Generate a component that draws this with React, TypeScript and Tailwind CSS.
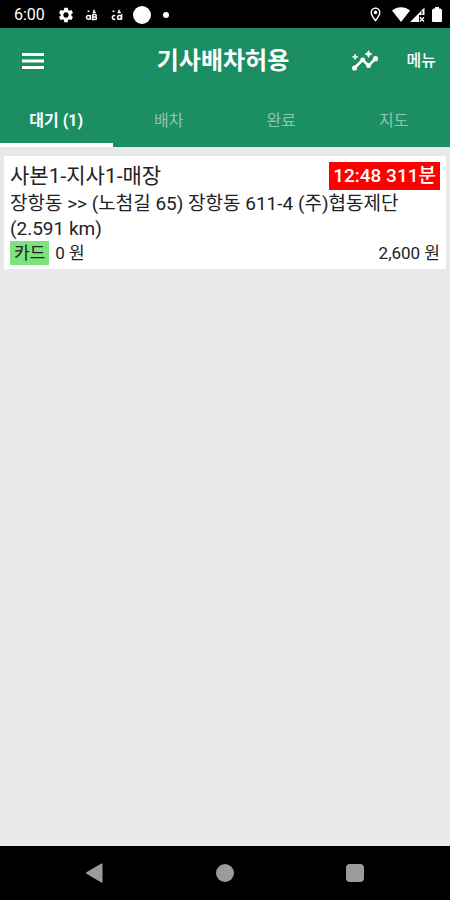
import React, { useState } from 'react';
import { MdOutlineLocationOn, MdSettings } from 'react-icons/md';

interface Order {
  id: number;
  store: string;
  time: string;
  elapsed: string;
  route: string;
  distance: string;
  payment: string;
  price: string;
  fee: string;
}

const TABS = ['대기 (1)', '배차', '완료', '지도'];

const ORDERS: Order[] = [
  {
    id: 1,
    store: '사본1-지사1-매장',
    time: '12:48',
    elapsed: '311분',
    route: '장항동 >> (노첨길 65) 장항동 611-4 (주)협동제단',
    distance: '(2.591 km)',
    payment: '카드',
    price: '0 원',
    fee: '2,600 원',
  },
];

// Two round glyphs with ticks above them, used for app notifications
function AppNoticeIcon({ open }: { open?: boolean }) {
  return (
    <svg viewBox="0 0 13 12" className="w-[13px] h-3" fill="none" stroke="white" strokeWidth="1.5">
      <path d="M2.6 2.2h1.8" />
      <path d="M9 .8v2.4M7.6 3.6h3.2" />
      <path d={open ? 'M5.2 6.8a1.9 1.9 0 1 0 0 3.2' : 'M5.5 6v4.8M5.3 8.4a1.9 1.9 0 1 1-3.8 0 1.9 1.9 0 0 1 3.8 0'} />
      <path d={open ? 'M11.6 5v5.8M11.4 8.4a1.9 1.9 0 1 1-3.8 0 1.9 1.9 0 0 1 3.8 0' : 'M7.8 5.6v5h2.4a1.2 1.2 0 0 0 0-2.5H7.8M10 8.1a1.2 1.2 0 0 0 0-2.5H7.8'} />
    </svg>
  );
}

// Zigzag line with round joints and two sparkles
function InsightsIcon() {
  return (
    <svg viewBox="0 0 24 24" className="w-7 h-7" fill="white" stroke="white">
      <path d="M3 18l7-7 5 5 6-6" fill="none" strokeWidth="2.2" />
      <g stroke="none">
        <circle cx="3" cy="18" r="2.2" />
        <circle cx="10" cy="11" r="2.1" />
        <circle cx="15" cy="16" r="2.1" />
        <circle cx="21" cy="10" r="2.2" />
      </g>
      <path strokeWidth="0.6" d="M15 9l.94-2.07L18 6l-2.06-.93L15 3l-.92 2.07L12 6l2.08.93zM3.500 11L4 9l2-.5L4 8l-.5-2L3 8l-2 .5L3 9z" />
    </svg>
  );
}

function StatusBar() {
  return (
    <div className="h-7 shrink-0 bg-black text-white flex items-center justify-between pl-3.5 pr-2">
      <div className="flex items-center pt-px">
        <span className="text-base leading-5">6:00</span>
        <MdSettings className="w-[18px] h-[18px] ml-3" />
        <span className="ml-2.5"><AppNoticeIcon /></span>
        <span className="ml-3"><AppNoticeIcon open /></span>
        <span className="w-[18px] h-[18px] ml-2.5 rounded-full bg-white" />
        <span className="w-1.5 h-1.5 ml-3 rounded-full bg-white" />
      </div>
      <div className="flex items-center">
        <MdOutlineLocationOn className="w-[17px] h-[17px]" />
        <svg viewBox="0 0 18 15" className="w-[18px] h-[15px] ml-2" fill="white">
          <path d="M0 3.6C5-.9 13-.9 18 3.6L9 15z" />
        </svg>
        <svg viewBox="0 0 16 15" className="w-4 h-[15px]" fill="none">
          <path d="M0 15 14.5.5V8H9v7z" fill="white" />
          <path d="M9.8 10.2l4.2 4.3M14 10.2l-4.2 4.3" stroke="white" strokeWidth="1.4" />
          <path d="M12 4v3.5" stroke="black" strokeWidth="1" />
        </svg>
        <svg viewBox="0 0 10 15" className="w-2.5 h-[15px] ml-1.5" fill="white">
          <path d="M3 0h4v1.4h1.6L10 3v11a1 1 0 0 1-1 1H1a1 1 0 0 1-1-1V3l1.4-1.6H3z" />
        </svg>
      </div>
    </div>
  );
}

function OrderCard({ order }: { order: Order }) {
  return (
    <article className="bg-white px-1.5 py-1 text-[#222]">
      <div className="h-[31px] flex items-center justify-between">
        <h2 className="text-[21px] leading-7">{order.store}</h2>
        <p className="bg-[#ff0000] text-white font-medium text-[19px] leading-7 px-1">
          {order.time} {order.elapsed}
        </p>
      </div>
      <p className="text-[19px] leading-[25px]">{order.route}</p>
      <p className="text-[19px] leading-[25px]">{order.distance}</p>
      <div className="flex items-center justify-between text-[17px] leading-6">
        <div className="flex items-center gap-1.5">
          <span className="bg-[#7de37d] px-1">{order.payment}</span>
          <span>{order.price}</span>
        </div>
        <span>{order.fee}</span>
      </div>
    </article>
  );
}

export default function App() {
  const [tab, setTab] = useState(0);

  return (
    <div
      lang="ko"
      className="min-h-screen flex flex-col bg-[#e9e9e9] font-[Roboto,'Noto_Sans_CJK_KR',sans-serif]"
    >
      <StatusBar />

      <header className="shrink-0 bg-[#1c8e63] text-white">
        <div className="h-16 pt-0.5 grid grid-cols-[1fr_auto_1fr] items-center pl-2.5 pr-3.5">
          <button aria-label="Open navigation" className="justify-self-start px-3 cursor-pointer">
            <svg viewBox="0 0 22 16" className="w-[22px] h-4" fill="white">
              <path d="M0 0h22v3H0zM0 6.5h22v3H0zM0 13h22v3H0z" />
            </svg>
          </button>
          <h1 className="text-2xl font-bold">기사배차허용</h1>
          <div className="justify-self-end flex items-center gap-7">
            <button aria-label="Insights" className="cursor-pointer">
              <InsightsIcon />
            </button>
            <button className="text-base font-medium cursor-pointer">메뉴</button>
          </div>
        </div>
        <nav role="tablist" className="grid grid-cols-4">
          {TABS.map((label, i) => (
            <button
              key={label}
              role="tab"
              aria-selected={tab === i}
              onClick={() => setTab(i)}
              className={`h-[55px] pt-1.5 border-b-4 text-base cursor-pointer ${
                tab === i ? 'border-white font-bold' : 'border-transparent text-white/50'
              }`}
            >
              {label}
            </button>
          ))}
        </nav>
      </header>

      <main className="flex-1 px-1 pt-[9px]">
        {tab === 0 && ORDERS.map(order => <OrderCard key={order.id} order={order} />)}
      </main>

      <footer className="h-[54px] shrink-0 bg-black grid grid-cols-[1fr_auto_1fr] items-center px-[86px]">
        <button aria-label="Back" className="justify-self-start cursor-pointer">
          <svg viewBox="2 0 18 20" className="w-[18px] h-5" fill="#9b9b9b">
            <path d="M18.5 1.3v17.4a.8.8 0 0 1-1.2.7L2.5 10.7a.8.8 0 0 1 0-1.4L17.3.6a.8.8 0 0 1 1.2.7z" />
          </svg>
        </button>
        <button aria-label="Home" className="w-[18px] h-[18px] rounded-full bg-[#9b9b9b] cursor-pointer" />
        <button aria-label="Recent apps" className="justify-self-end w-[18px] h-[18px] rounded-sm bg-[#9b9b9b] cursor-pointer" />
      </footer>
    </div>
  );
}
